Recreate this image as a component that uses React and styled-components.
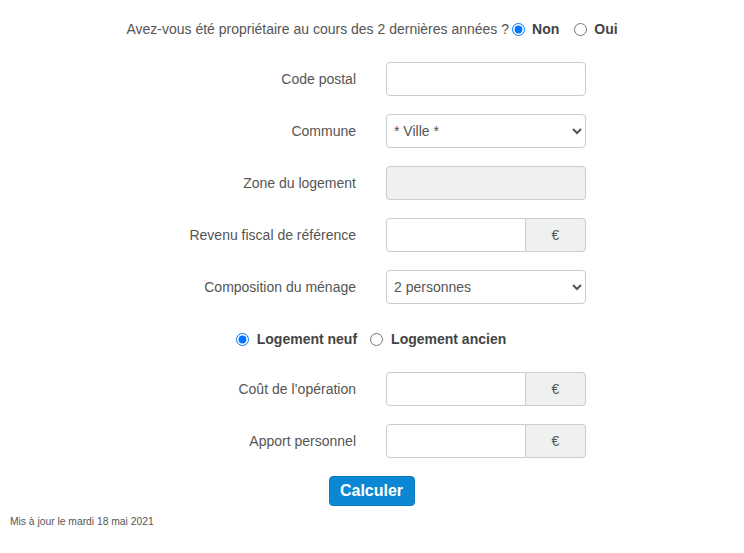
import { useState } from 'react';
import styled, { createGlobalStyle } from 'styled-components';

const GlobalStyle = createGlobalStyle`
  body {
    margin: 0;
    background: #fff;
    font-family: "Liberation Sans", Arial, sans-serif;
    font-size: 14px;
    color: #555;
  }
`;

const Page = styled.div`
  width: 744px;
  padding-top: 19px;
  box-sizing: border-box;
`;

const Question = styled.div`
  display: flex;
  align-items: center;
  justify-content: center;
  height: 20px;
  margin-bottom: 23px;
`;

const RadioLabel = styled.label`
  display: inline-flex;
  align-items: center;
  font-weight: bold;
  color: #444;
  margin-left: ${(p) => p.$gap || 0}px;
  cursor: pointer;
`;

const Radio = styled.input.attrs({ type: 'radio' })`
  width: 13px;
  height: 13px;
  margin: 0 ${(p) => p.$after || 7}px 0 ${(p) => p.$before || 0}px;
`;

const Row = styled.div`
  display: grid;
  grid-template-columns: 1fr 1fr;
  align-items: center;
  height: 34px;
  margin-bottom: ${(p) => p.$mb ?? 18}px;
`;

const Label = styled.label`
  text-align: right;
  padding-right: 16px;
`;

const Field = styled.div`
  padding-left: 14px;
`;

const Input = styled.input`
  box-sizing: border-box;
  width: ${(p) => p.$w || 200}px;
  height: 34px;
  padding: 6px 8px;
  border: 1px solid #ccc;
  border-radius: ${(p) => (p.$joined ? '4px 0 0 4px' : '4px')};
  background: ${(p) => (p.disabled ? '#eef1ee' : '#fff')};
  font: inherit;
  color: #555;
`;

const Select = styled.select`
  box-sizing: border-box;
  width: 200px;
  height: 34px;
  padding: 0 3px;
  border: 1px solid #ccc;
  border-radius: 4px;
  background: #fff;
  font: inherit;
  color: #555;
`;

const Group = styled.div`
  display: flex;
  width: 200px;
`;

const Addon = styled.span`
  box-sizing: border-box;
  width: 60px;
  height: 34px;
  display: flex;
  align-items: center;
  justify-content: center;
  border: 1px solid #ccc;
  border-left: none;
  border-radius: 0 4px 4px 0;
  background: #eef1ee;
  color: #555;
`;

const TypeRow = styled.div`
  display: flex;
  align-items: center;
  justify-content: center;
  height: 20px;
  margin: 25px 0 23px -2px;
`;

const Actions = styled.div`
  display: flex;
  justify-content: center;
  margin: 1px 0 0 -1px;
`;

const Button = styled.button`
  width: 86px;
  height: 30px;
  border: 1px solid #0b7cc1;
  border-radius: 4px;
  background: #0b87d4;
  color: #fff;
  font-family: "Liberation Sans", Arial, sans-serif;
  font-weight: bold;
  font-size: 16px;
  cursor: pointer;
`;

const Updated = styled.div`
  margin: 10px 0 0 10px;
  font-size: 10.3px;
  color: #555;
`;

const MoneyField = ({ id }) => (
  <Group>
    <Input id={id} $w={140} $joined />
    <Addon>€</Addon>
  </Group>
);

export default function App() {
  const [owner, setOwner] = useState('non');
  const [kind, setKind] = useState('neuf');

  return (
    <Page>
      <GlobalStyle />
      <Question>
        Avez-vous été propriétaire au cours des 2 dernières années ?
        <RadioLabel>
          <Radio $before={3} $after={7} checked={owner === 'non'} onChange={() => setOwner('non')} />
          Non
        </RadioLabel>
        <RadioLabel $gap={15}>
          <Radio $after={7} checked={owner === 'oui'} onChange={() => setOwner('oui')} />
          Oui
        </RadioLabel>
      </Question>

      <Row>
        <Label htmlFor="cp">Code postal</Label>
        <Field><Input id="cp" /></Field>
      </Row>
      <Row>
        <Label htmlFor="commune">Commune</Label>
        <Field>
          <Select id="commune">
            <option>* Ville *</option>
          </Select>
        </Field>
      </Row>
      <Row>
        <Label htmlFor="zone">Zone du logement</Label>
        <Field><Input id="zone" disabled /></Field>
      </Row>
      <Row>
        <Label htmlFor="rfr">Revenu fiscal de référence</Label>
        <Field><MoneyField id="rfr" /></Field>
      </Row>
      <Row $mb={0}>
        <Label htmlFor="menage">Composition du ménage</Label>
        <Field>
          <Select id="menage" defaultValue="2">
            <option value="1">1 personne</option>
            <option value="2">2 personnes</option>
            <option value="3">3 personnes</option>
          </Select>
        </Field>
      </Row>

      <TypeRow>
        <RadioLabel>
          <Radio $after={8} checked={kind === 'neuf'} onChange={() => setKind('neuf')} />
          Logement neuf
        </RadioLabel>
        <RadioLabel $gap={13}>
          <Radio $after={8} checked={kind === 'ancien'} onChange={() => setKind('ancien')} />
          Logement ancien
        </RadioLabel>
      </TypeRow>

      <Row>
        <Label htmlFor="cout">Coût de l’opération</Label>
        <Field><MoneyField id="cout" /></Field>
      </Row>
      <Row>
        <Label htmlFor="apport">Apport personnel</Label>
        <Field><MoneyField id="apport" /></Field>
      </Row>

      <Actions>
        <Button type="button">Calculer</Button>
      </Actions>
      <Updated>Mis à jour le mardi 18 mai 2021</Updated>
    </Page>
  );
}
